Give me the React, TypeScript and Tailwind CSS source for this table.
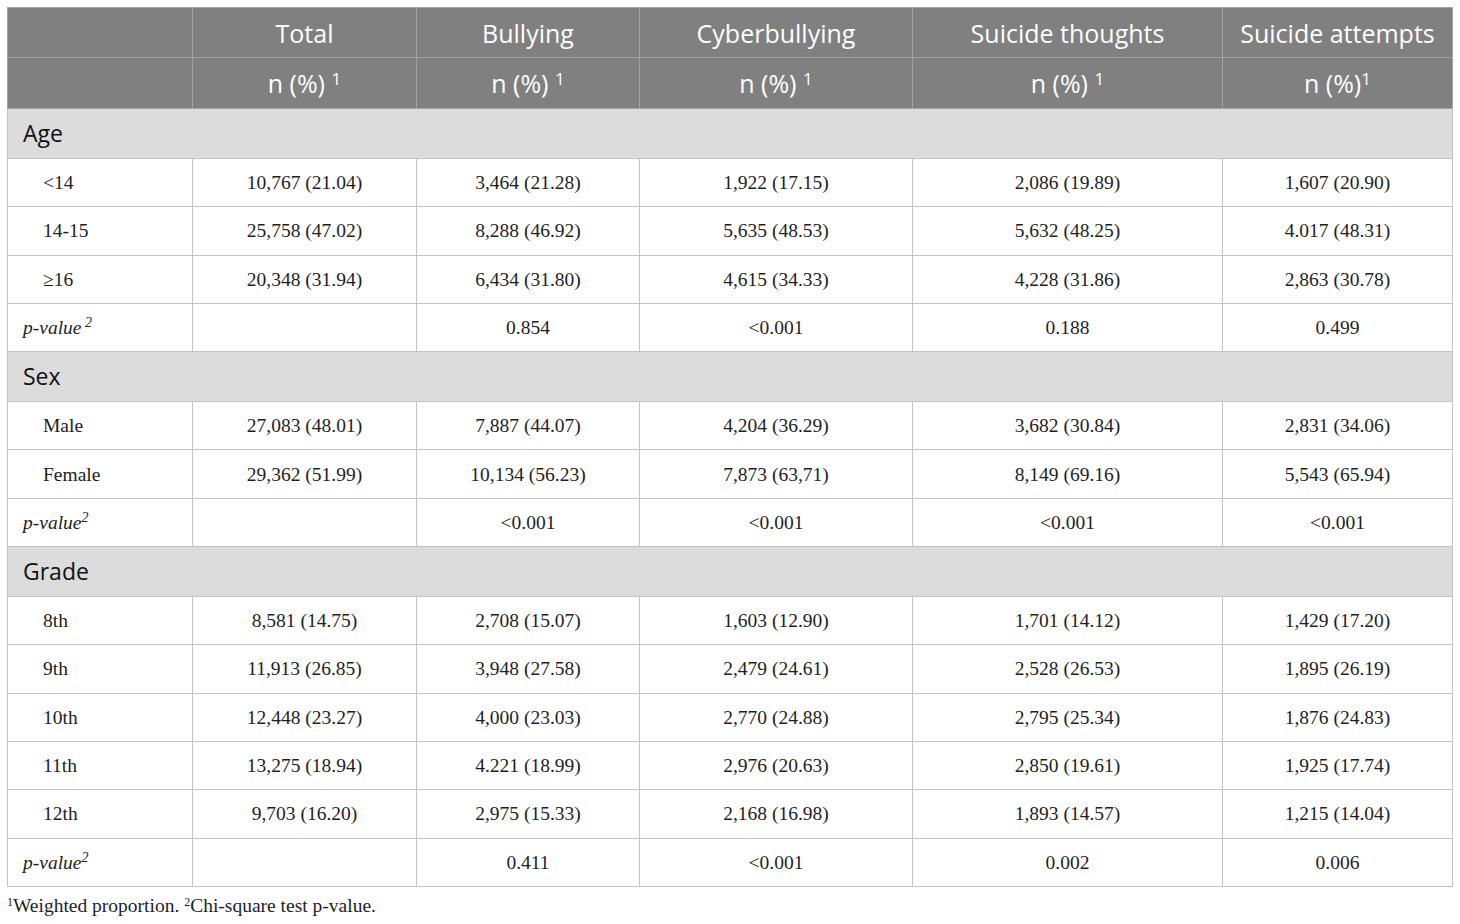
import React from 'react';

type Row = { label: string; values: string[]; pvalue?: boolean; supSpace?: boolean };
type Section = { title: string; rows: Row[] };

const sections: Section[] = [
  {
    title: 'Age',
    rows: [
      { label: '<14', values: ['10,767 (21.04)', '3,464 (21.28)', '1,922 (17.15)', '2,086 (19.89)', '1,607 (20.90)'] },
      { label: '14-15', values: ['25,758 (47.02)', '8,288 (46.92)', '5,635 (48.53)', '5,632 (48.25)', '4.017 (48.31)'] },
      { label: '≥16', values: ['20,348 (31.94)', '6,434 (31.80)', '4,615 (34.33)', '4,228 (31.86)', '2,863 (30.78)'] },
      { label: 'p-value', pvalue: true, supSpace: true, values: ['', '0.854', '<0.001', '0.188', '0.499'] },
    ],
  },
  {
    title: 'Sex',
    rows: [
      { label: 'Male', values: ['27,083 (48.01)', '7,887 (44.07)', '4,204 (36.29)', '3,682 (30.84)', '2,831 (34.06)'] },
      { label: 'Female', values: ['29,362 (51.99)', '10,134 (56.23)', '7,873 (63,71)', '8,149 (69.16)', '5,543 (65.94)'] },
      { label: 'p-value', pvalue: true, values: ['', '<0.001', '<0.001', '<0.001', '<0.001'] },
    ],
  },
  {
    title: 'Grade',
    rows: [
      { label: '8th', values: ['8,581 (14.75)', '2,708 (15.07)', '1,603 (12.90)', '1,701 (14.12)', '1,429 (17.20)'] },
      { label: '9th', values: ['11,913 (26.85)', '3,948 (27.58)', '2,479 (24.61)', '2,528 (26.53)', '1,895 (26.19)'] },
      { label: '10th', values: ['12,448 (23.27)', '4,000 (23.03)', '2,770 (24.88)', '2,795 (25.34)', '1,876 (24.83)'] },
      { label: '11th', values: ['13,275 (18.94)', '4.221 (18.99)', '2,976 (20.63)', '2,850 (19.61)', '1,925 (17.74)'] },
      { label: '12th', values: ['9,703 (16.20)', '2,975 (15.33)', '2,168 (16.98)', '1,893 (14.57)', '1,215 (14.04)'] },
      { label: 'p-value', pvalue: true, values: ['', '0.411', '<0.001', '0.002', '0.006'] },
    ],
  },
];

const headers = ['Total', 'Bullying', 'Cyberbullying', 'Suicide thoughts', 'Suicide attempts'];
const sans = "font-['Open_Sans','Noto_Sans',sans-serif]";
const serif = "font-['Liberation_Serif','DejaVu_Serif',serif]";

export default function App() {
  return (
    <div className="min-h-[924px] w-[1460px] bg-white pl-[7px] pt-[7px]">
      <table className="w-[1446px] table-fixed border-collapse border border-[#c4c4c4]">
        <colgroup>
          <col className="w-[185px]" />
          <col className="w-[224px]" />
          <col className="w-[223px]" />
          <col className="w-[273px]" />
          <col className="w-[310px]" />
          <col className="w-[230px]" />
        </colgroup>
        <thead className={`${sans} bg-[#808080] text-[25px] text-white`}>
          <tr className="h-[50px]">
            <th className="border border-[#a3a3a3]" />
            {headers.map((h) => (
              <th key={h} className="border border-[#a3a3a3] pt-[2px] text-center font-normal">
                {h}
              </th>
            ))}
          </tr>
          <tr className="h-[51px]">
            <th className="border border-[#a3a3a3]" />
            {headers.map((h, i) => (
              <th key={h} className="border border-[#a3a3a3] pt-[2px] text-center font-normal">
                n (%){i === 4 ? '' : ' '}
                <sup className="text-[17px]">1</sup>
              </th>
            ))}
          </tr>
        </thead>
        <tbody className={`${serif} text-[19.5px] text-[#1e1e1e]`}>
          {sections.map((s) => (
            <React.Fragment key={s.title}>
              <tr className="h-[50px] bg-[#dcdcdc]">
                <td colSpan={6} className={`${sans} border border-[#c4c4c4] pl-[15px] text-[23px] text-[#111]`}>
                  {s.title}
                </td>
              </tr>
              {s.rows.map((r, idx) => (
                <tr key={s.title + idx} className="h-[48.3px]">
                  <td className={`border border-[#c4c4c4] ${r.pvalue ? 'pl-[15px] italic' : 'pl-[35px]'}`}>
                    {r.label}
                    {r.pvalue && (
                      <sup className="text-[14px]">{r.supSpace ? ' 2' : '2'}</sup>
                    )}
                  </td>
                  {r.values.map((v, j) => (
                    <td key={j} className="border border-[#c4c4c4] text-center">
                      {v}
                    </td>
                  ))}
                </tr>
              ))}
            </React.Fragment>
          ))}
        </tbody>
      </table>
      <p className={`${serif} mt-[4px] text-[19.5px] text-[#1e1e1e]`}>
        <sup className="text-[12px]">1</sup>Weighted proportion. <sup className="text-[12px]">2</sup>Chi-square test p-value.
      </p>
    </div>
  );
}
